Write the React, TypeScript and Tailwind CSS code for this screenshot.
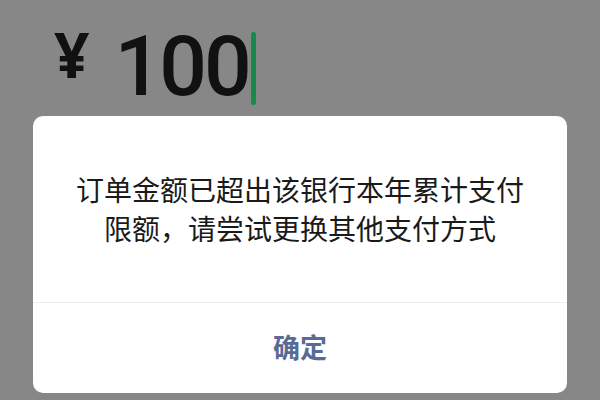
const App = () => {
  return (
    <div
      className="flex h-[400px] w-[600px] flex-col overflow-hidden bg-[#878787]"
      style={{ fontFamily: '"Noto Sans", "Noto Sans CJK SC", sans-serif' }}
    >
      {/* Amount input */}
      <div className="flex h-[116px] items-start pl-[54px] pt-[14px]">
        <span className="mt-[4px] text-[62px] font-bold leading-[72px] text-[#111]">¥</span>
        <span
          className="ml-[25px] mt-[5px] text-[84px] font-medium leading-[96px] tracking-[-3px] text-[#111]"
          style={{ fontFamily: "Roboto, sans-serif" }}
        >
          100
        </span>
        <span className="ml-[2px] mt-[18px] h-[73px] w-[5px] rounded-full bg-[#168a4a]" />
      </div>

      {/* Dialog */}
      <div className="mx-[33px] flex h-[277px] flex-col rounded-[10px] bg-white">
        <div className="flex h-[187px] items-center justify-center border-b border-[#ececec] px-6 text-center">
          <p className="mt-[2px] text-[28px] leading-[39px] text-[#1a1a1a]">
            订单金额已超出该银行本年累计支付
            <br />
            限额，请尝试更换其他支付方式
          </p>
        </div>
        <button className="flex flex-1 items-center justify-center text-[27px] font-bold text-[#576b95]">
          确定
        </button>
      </div>
    </div>
  );
};

export default App;
